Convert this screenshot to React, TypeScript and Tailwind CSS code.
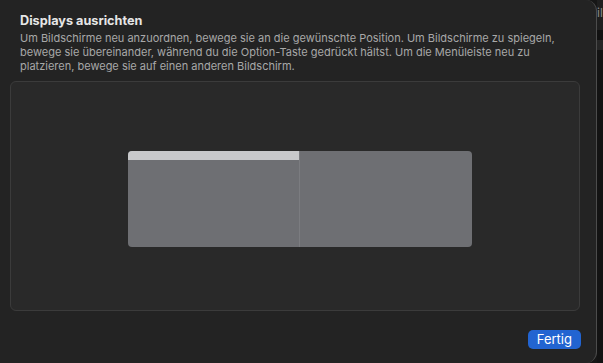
import React from "react";

function DisplayArrangement() {
  return (
    <div className="flex h-[96px] w-[344px] overflow-hidden rounded-[4px] bg-[#6e6f73]">
      {/* main display with menu bar */}
      <div className="flex w-[172px] flex-col border-r border-[#7b7c80]">
        <div className="h-[9px] bg-[#c8c9cb]" />
        <div className="flex-1" />
      </div>
      <div className="flex-1" />
    </div>
  );
}

export default function App() {
  return (
    <div
      className="flex h-[363px] w-[603px] overflow-hidden bg-[#161616]"
      style={{ fontFamily: "Inter, 'Liberation Sans', sans-serif" }}
    >
      <div className="flex h-full w-[597px] shrink-0 flex-col rounded-r-[11px] border-r border-[#4c4c4c] bg-[#232323]">
        <div className="px-5 pt-[13px]">
          <h1 className="text-[12.7px] font-bold leading-[16px] text-[#e6e6e6]">
            Displays ausrichten
          </h1>
          <p className="mt-[2px] text-[11px] leading-[14px] text-[#a8a8a8]">
            Um Bildschirme neu anzuordnen, bewege sie an die gewünschte Position. Um Bildschirme zu spiegeln,
            bewege sie übereinander, während du die Option-Taste gedrückt hältst. Um die Menüleiste neu zu
            platzieren, bewege sie auf einen anderen Bildschirm.
          </p>
        </div>

        <div className="mx-[10px] mt-[8px] flex h-[230px] w-[570px] items-start rounded-[6px] border border-[#3b3b3b] bg-[#292929] pl-[117px] pt-[69px]">
          <DisplayArrangement />
        </div>

        <div className="flex justify-end pr-[15px] pt-[19px]">
          <button className="h-[19px] rounded-[5px] bg-[#2264d1] px-[9px] text-[13px] leading-[19px] text-white">
            Fertig
          </button>
        </div>
      </div>

      {/* edge of the window behind */}
      <div className="flex flex-1 flex-col">
        <div className="h-[30px] overflow-hidden bg-[#1f1f1f] pt-[6px] text-[12px] leading-[14px] text-[#8a8a8a]">
          il
        </div>
        <div className="h-[10px] bg-[#111111]" />
        <div className="h-[10px] bg-[#262626]" />
        <div className="flex-1 bg-[#131313]" />
      </div>
    </div>
  );
}
